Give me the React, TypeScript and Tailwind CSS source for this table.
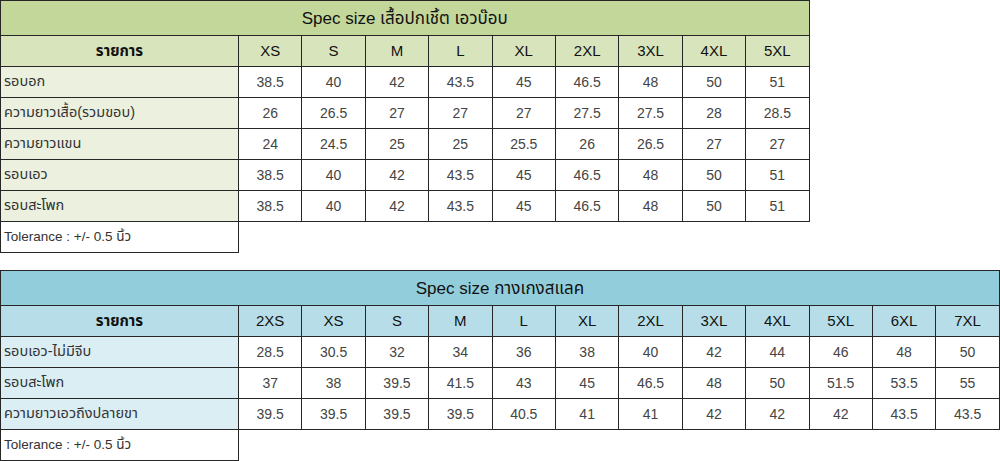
const shirtSizes = ['XS', 'S', 'M', 'L', 'XL', '2XL', '3XL', '4XL', '5XL'];
const shirtRows: [string, string[]][] = [
  ['รอบอก', ['38.5', '40', '42', '43.5', '45', '46.5', '48', '50', '51']],
  ['ความยาวเสื้อ(รวมขอบ)', ['26', '26.5', '27', '27', '27', '27.5', '27.5', '28', '28.5']],
  ['ความยาวแขน', ['24', '24.5', '25', '25', '25.5', '26', '26.5', '27', '27']],
  ['รอบเอว', ['38.5', '40', '42', '43.5', '45', '46.5', '48', '50', '51']],
  ['รอบสะโพก', ['38.5', '40', '42', '43.5', '45', '46.5', '48', '50', '51']],
];

const pantSizes = ['2XS', 'XS', 'S', 'M', 'L', 'XL', '2XL', '3XL', '4XL', '5XL', '6XL', '7XL'];
const pantRows: [string, string[]][] = [
  ['รอบเอว-ไม่มีจีบ', ['28.5', '30.5', '32', '34', '36', '38', '40', '42', '44', '46', '48', '50']],
  ['รอบสะโพก', ['37', '38', '39.5', '41.5', '43', '45', '46.5', '48', '50', '51.5', '53.5', '55']],
  ['ความยาวเอวถึงปลายขา', ['39.5', '39.5', '39.5', '39.5', '40.5', '41', '41', '42', '42', '42', '43.5', '43.5']],
];

type Theme = { title: string; head: string; label: string };

const green: Theme = { title: 'bg-[#c4d79b]', head: 'bg-[#d8e4bc]', label: 'bg-[#ebf1de]' };
const blue: Theme = { title: 'bg-[#92cddc]', head: 'bg-[#b7dee8]', label: 'bg-[#daeef3]' };

function SpecTable({ title, sizes, rows, theme }: { title: string; sizes: string[]; rows: [string, string[]][]; theme: Theme }) {
  const cell = 'border border-[#262626] p-0';
  return (
    <table className="border-collapse table-fixed" style={{ width: 238 + sizes.length * 63.4 }}>
      <colgroup>
        <col style={{ width: 238 }} />
        {sizes.map((s) => (
          <col key={s} style={{ width: 63.4 }} />
        ))}
      </colgroup>
      <tbody>
        {/* title bar */}
        <tr className="h-[35px]">
          <td colSpan={sizes.length + 1} className={`${cell} ${theme.title} pt-[1px] text-center text-[17px] text-[#111]`}>
            {title}
          </td>
        </tr>
        {/* size header */}
        <tr className="h-[31px]">
          <td className={`${cell} ${theme.head} text-center text-[15px] font-bold text-[#111]`}>รายการ</td>
          {sizes.map((s) => (
            <td key={s} className={`${cell} ${theme.head} text-center text-[15px] text-[#111]`}>
              {s}
            </td>
          ))}
        </tr>
        {rows.map(([label, vals]) => (
          <tr key={label} className="h-[31px]">
            <td className={`${cell} ${theme.label} pl-[3px] text-left text-[14.5px] text-[#333]`}>{label}</td>
            {vals.map((v, i) => (
              <td key={i} className={`${cell} bg-white text-center text-[14px] text-[#444]`}>
                {v}
              </td>
            ))}
          </tr>
        ))}
        <tr className="h-[31px]">
          <td className={`${cell} bg-white pl-[3px] text-left text-[13.5px] text-[#333]`}>Tolerance : +/- 0.5 นิ้ว</td>
        </tr>
      </tbody>
    </table>
  );
}

export default function App() {
  return (
    <div className="w-[1000px] h-[461px] bg-white overflow-hidden font-['Liberation_Sans','Noto_Sans_Thai','Noto_Sans',sans-serif]">
      <SpecTable title="Spec size เสื้อปกเชิ้ต เอวบ๊อบ" sizes={shirtSizes} rows={shirtRows} theme={green} />
      <div className="h-[17px]" />
      <SpecTable title="Spec size กางเกงสแลค" sizes={pantSizes} rows={pantRows} theme={blue} />
    </div>
  );
}
